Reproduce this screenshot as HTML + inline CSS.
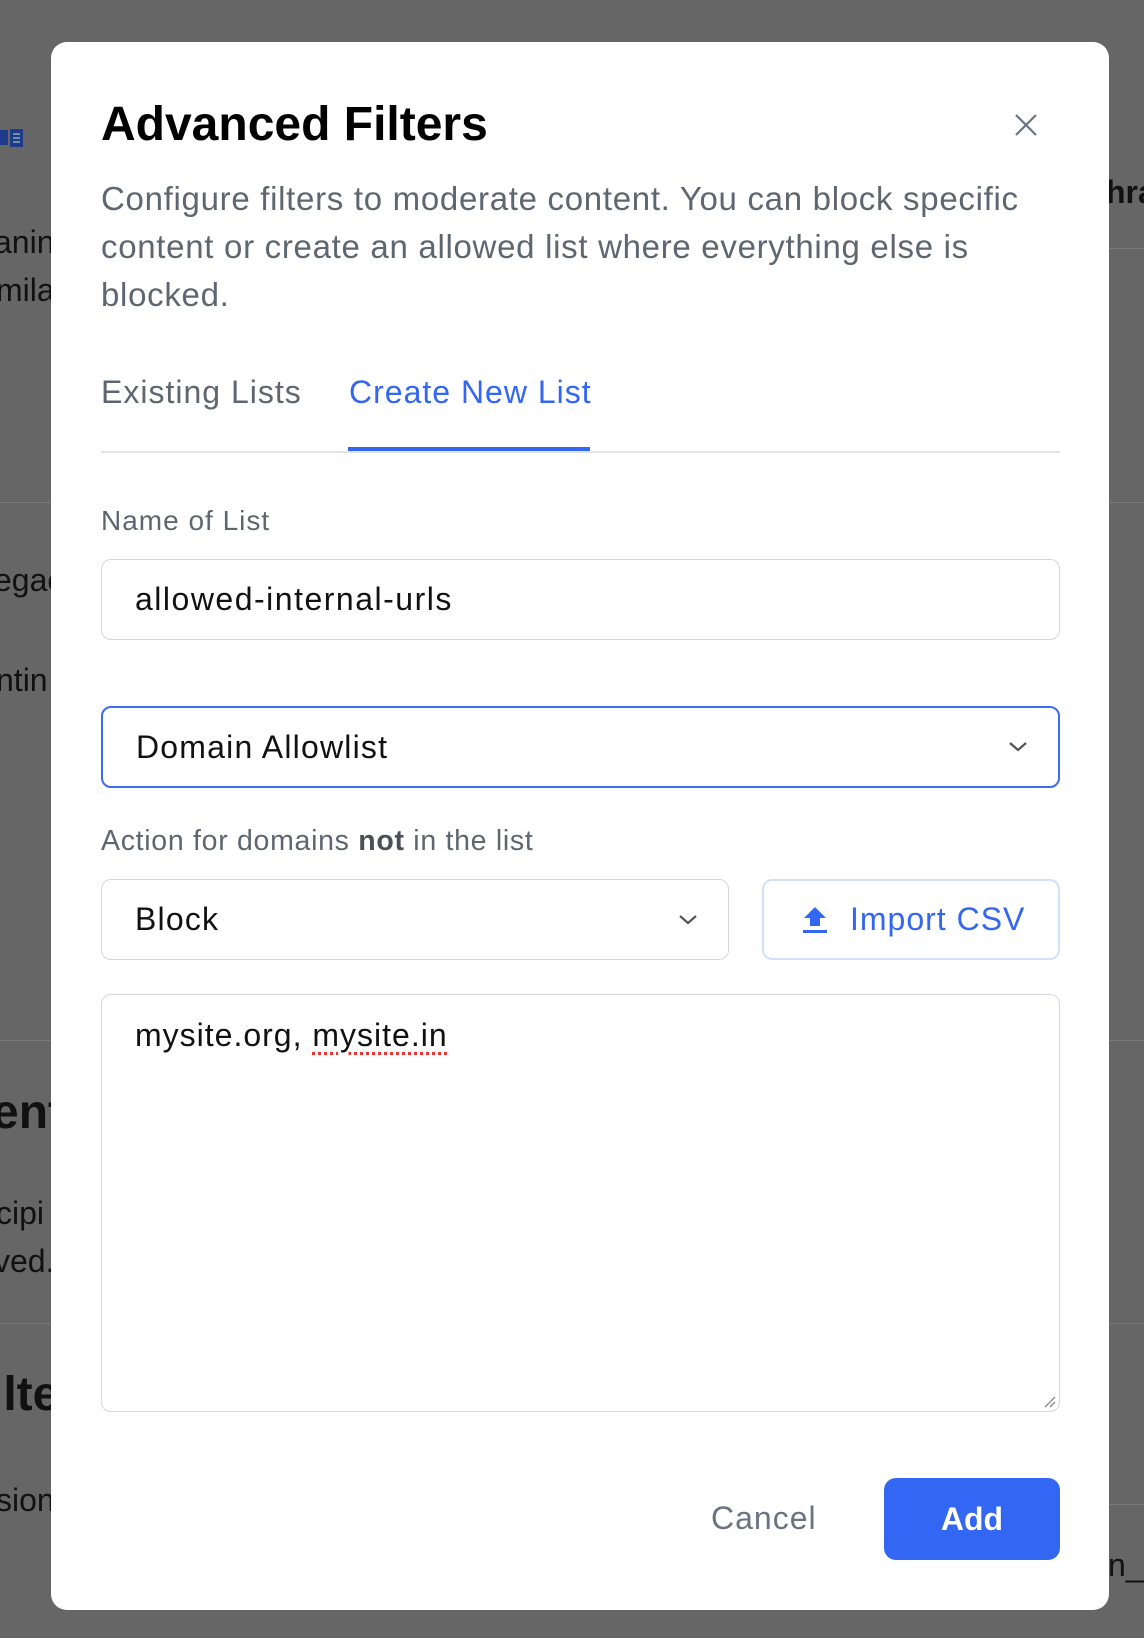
<!DOCTYPE html>
<html><head><meta charset="utf-8"><style>
*{box-sizing:border-box;margin:0;padding:0}
body{width:1144px;height:1638px;background:#666;position:relative;overflow:hidden;font-family:"Liberation Sans",Arial,sans-serif}
.bg{position:absolute;color:#111;font-size:32px}
.ln{position:absolute;height:1px;background:#7a7a7a}
.modal{position:absolute;left:51px;top:42px;width:1058px;height:1568px;background:#fff;border-radius:16px}
.abs{position:absolute}
.inp{position:absolute;border:1.5px solid #d4d7dc;border-radius:10px;font-size:32px;letter-spacing:1.2px;color:#111;padding-left:33px;display:flex;align-items:center}
.chev{position:absolute;top:50%;margin-top:-6px}
</style></head><body>
<div class="bg" style="left:-4px;top:120px;"><svg width="30" height="22"><rect x="0" y="3" width="12" height="15" fill="#1e3a8a"/><rect x="14" y="2" width="13" height="18" fill="#1e3a8a"/><path d="M17 7h7M17 11h7M17 15h7" stroke="#8aa" stroke-width="1.5"/></svg></div>
<div class="bg" style="left:-6px;top:224px">anin</div>
<div class="bg" style="left:-4px;top:272px">mila</div>
<div class="ln" style="left:0;width:51px;top:502px"></div>
<div class="bg" style="left:-6px;top:562px">egac</div>
<div class="bg" style="left:-4px;top:662px">ntin</div>
<div class="ln" style="left:0;width:51px;top:1040px"></div>
<div class="bg" style="left:-8px;top:1085px;font-size:48px;font-weight:bold">ent</div>
<div class="bg" style="left:-4px;top:1195px">cipi</div>
<div class="bg" style="left:-6px;top:1243px">ved.</div>
<div class="ln" style="left:0;width:51px;top:1323px"></div>
<div class="bg" style="left:-10px;top:1367px;font-size:48px;font-weight:bold">ilte</div>
<div class="bg" style="left:-4px;top:1482px">sion</div>
<div class="bg" style="left:1106px;top:174px;font-weight:bold">hra</div>
<div class="ln" style="left:1109px;width:40px;top:248px"></div>
<div class="ln" style="left:1109px;width:40px;top:502px"></div>
<div class="ln" style="left:1109px;width:40px;top:1040px"></div>
<div class="ln" style="left:1109px;width:40px;top:1323px"></div>
<div class="ln" style="left:1109px;width:40px;top:1504px"></div>
<div class="bg" style="left:1108px;top:1547px">n_a</div>

<div class="modal">
<div class="abs" style="left:50px;top:54px;font-size:48px;font-weight:bold;color:#000;line-height:1.2">Advanced Filters</div>
<svg class="abs" style="left:964px;top:72px" width="22" height="22"><path d="M1 1L21 21M21 1L1 21" stroke="#6b7280" stroke-width="2.2"/></svg>
<div class="abs" style="left:50px;top:133px;width:1000px;font-size:33px;letter-spacing:0.7px;line-height:48px;color:#5f6670;white-space:nowrap">Configure filters to moderate content. You can block specific<br>content or create an allowed list where everything else is<br>blocked.</div>
<div class="abs" style="left:50px;top:330px;font-size:32px;letter-spacing:1.0px;color:#5f6670;line-height:40px">Existing Lists</div>
<div class="abs" style="left:298px;top:330px;font-size:32px;letter-spacing:1.0px;color:#3366f2;line-height:40px">Create New List</div>
<div class="abs" style="left:50px;top:409px;width:959px;height:2px;background:#e1e3e6"></div>
<div class="abs" style="left:297px;top:405px;width:242px;height:4px;background:#3366f2"></div>
<div class="abs" style="left:50px;top:462px;font-size:28px;letter-spacing:1px;color:#5f6670;line-height:34px">Name of List</div>
<div class="inp" style="left:50px;top:517px;width:959px;height:81px;letter-spacing:1.5px">allowed-internal-urls</div>
<div class="inp" style="left:50px;top:664px;width:959px;height:82px;border:2px solid #3b6cf5">Domain Allowlist
<svg class="chev" style="right:30px" width="20" height="12"><path d="M2 2L10 9L18 2" stroke="#555" stroke-width="2.2" fill="none"/></svg></div>
<div class="abs" style="left:50px;top:782px;font-size:28.5px;letter-spacing:0.7px;color:#5f6670;line-height:34px">Action for domains <b style="color:#4b5058">not</b> in the list</div>
<div class="inp" style="left:50px;top:837px;width:628px;height:81px">Block
<svg class="chev" style="right:30px" width="20" height="12"><path d="M2 2L10 9L18 2" stroke="#555" stroke-width="2.2" fill="none"/></svg></div>
<div class="abs" style="left:711px;top:837px;width:298px;height:81px;border:2px solid #d3e0fb;border-radius:10px;display:flex;align-items:center;color:#3366f2;font-size:32px;letter-spacing:1px">
<svg style="margin-left:38px;margin-right:22px" width="26" height="28"><path d="M13 1L2 12H8V20H18V12H24Z" fill="#3366f2"/><rect x="1" y="24" width="24" height="3" fill="#3366f2"/></svg>Import CSV</div>
<div class="inp" style="left:50px;top:952px;width:959px;height:418px;align-items:flex-start;padding-top:22px;letter-spacing:1px">mysite.org,&nbsp;<span style="text-decoration:underline dotted #e33;text-underline-offset:6px">mysite.in</span>
<svg class="abs" style="right:2px;bottom:2px" width="14" height="14"><path d="M2 12L12 2M7 12L12 7" stroke="#888" stroke-width="1.3"/></svg></div>
<div class="abs" style="left:660px;top:1456px;font-size:32px;letter-spacing:1px;color:#6b7280;line-height:40px">Cancel</div>
<div class="abs" style="left:833px;top:1436px;width:176px;height:82px;background:#3366f2;border-radius:12px;color:#fff;font-size:32px;font-weight:bold;display:flex;align-items:center;justify-content:center">Add</div>
</div>
</body></html>
